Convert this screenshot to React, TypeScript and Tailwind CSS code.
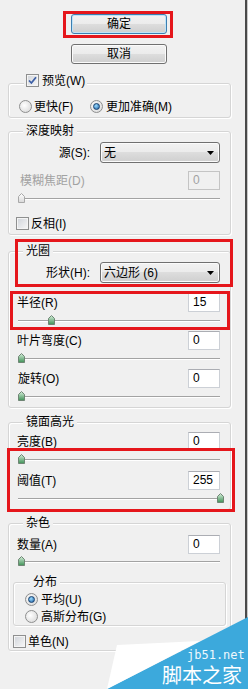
import { useId } from 'react';

const btnBg = 'bg-[linear-gradient(#f2f2f2_0%,#ebebeb_50%,#dddddd_50%,#cfcfcf_100%)]';

function Checkbox({ checked }: { checked?: boolean }) {
  return (
    <span className="w-[13px] h-[13px] shrink-0 border border-[#8e8f8f] bg-[linear-gradient(135deg,#cfd3d9,#f8f8f8)] shadow-[inset_0_0_0_1px_#f4f4f4] flex items-center justify-center">
      {checked && (
        <svg width="9" height="9" viewBox="0 0 9 9">
          <path d="M1 4.5 L3.4 7 L8 1.2" stroke="#3d5fa6" strokeWidth="1.8" fill="none" />
        </svg>
      )}
    </span>
  );
}

function Radio({ checked }: { checked?: boolean }) {
  return (
    <span className="w-[13px] h-[13px] shrink-0 rounded-full border border-[#8e8f8f] bg-[radial-gradient(circle_at_40%_40%,#ffffff,#d4d4d4)] flex items-center justify-center">
      {checked && (
        <span className="w-[7px] h-[7px] rounded-full border border-[#16406e] bg-[radial-gradient(circle_at_40%_35%,#9adcff,#1d5ea3)]" />
      )}
    </span>
  );
}

function Title({ children, className = 'ml-[14px]' }: { children: React.ReactNode; className?: string }) {
  return (
    <div className={`-mt-[8px] w-fit h-[14px] px-[3px] bg-[#f0f0f0] leading-[14px] ${className}`}>{children}</div>
  );
}

function Thumb({ left, disabled }: { left: number; disabled?: boolean }) {
  const id = useId();
  return (
    <svg width="7" height="10" viewBox="0 0 7 10" className="absolute top-0" style={{ left }}>
      <defs>
        <linearGradient id={id} x1="0" y1="0" x2="0" y2="1">
          <stop offset="0" stopColor={disabled ? '#ffffff' : '#d6eedb'} />
          <stop offset="1" stopColor={disabled ? '#d8d8d8' : '#3f9156'} />
        </linearGradient>
      </defs>
      <path d="M3.5 0.5 L6.5 3.5 V9.5 H0.5 V3.5 Z" fill={`url(#${id})`} stroke={disabled ? '#a8a8a8' : '#6f8574'} />
    </svg>
  );
}

function Slider({ value, max, disabled, className }: { value: number; max: number; disabled?: boolean; className: string }) {
  return (
    <div className={`relative ml-[9px] w-[206px] h-[10px] ${className}`}>
      <div className="w-[202px] mt-[5px] h-[2px] border-t border-t-[#a3a3a3] border-b border-b-white" />
      <Thumb left={Math.round((value / max) * 199)} disabled={disabled} />
    </div>
  );
}

function Field({ label, value, disabled, className }: { label: string; value: string; disabled?: boolean; className: string }) {
  return (
    <div className={`flex items-center justify-between h-[19px] pr-[10px] ${className}`}>
      <span className={disabled ? 'text-[#a2a2a2]' : ''}>{label}</span>
      <div
        className={`w-[32px] h-[19px] border pl-[4px] leading-[17px] ${
          disabled ? 'border-[#c4c4c4] bg-[#f0f0f0] text-[#a2a2a2]' : 'border-[#ccd0d6] border-t-[#abadb3] bg-white'
        }`}
      >
        {value}
      </div>
    </div>
  );
}

function Select({ label, value, className }: { label: string; value: string; className: string }) {
  return (
    <div className={`flex items-center h-[21px] ${className}`}>
      <span className="w-[81px] text-right">{label}</span>
      <div className={`ml-[10px] w-[120px] h-[21px] rounded-[3px] border border-[#707070] ${btnBg} shadow-[inset_0_0_0_1px_#fbfbfb] flex items-center justify-between pl-[3px] pr-[5px]`}>
        <span>{value}</span>
        <svg width="7" height="4" viewBox="0 0 7 4">
          <path d="M0 0 H7 L3.5 4 Z" fill="#000" />
        </svg>
      </div>
    </div>
  );
}

const groupCls = 'ml-[8px] w-[223px] border border-[#d5d5d5] rounded-[3px] shadow-[inset_1px_1px_0_#fff,1px_1px_0_#fff] flex flex-col';

export default function App() {
  return (
    <div className="relative w-[248px] h-[689px] overflow-hidden bg-[#f0f0f0] text-[12px] leading-[14px] text-black font-['Liberation_Sans','Noto_Sans_CJK_SC',sans-serif] flex">
      <div className="w-[245px] flex flex-col">
        <div className={`mt-[14px] ml-[71px] w-[96px] h-[20px] rounded-[3px] border border-[#3c7fb1] ${btnBg} shadow-[inset_0_0_0_1px_#bfe3f7] flex items-center justify-center`}>
          确定
        </div>
        <div className={`mt-[10px] ml-[71px] w-[96px] h-[20px] rounded-[3px] border border-[#707070] ${btnBg} shadow-[inset_0_0_0_1px_#fbfbfb] flex items-center justify-center`}>
          取消
        </div>

        {/* 预览 */}
        <div className={`${groupCls} mt-[19px] h-[35px]`}>
          <div className="-mt-[10px] ml-[15px] w-fit h-[13px] px-[2px] bg-[#f0f0f0] flex items-center gap-[3px]">
            <Checkbox checked />
            <span>预览(W)</span>
          </div>
          <div className="mt-[13px] h-[13px] flex items-center">
            <div className="ml-[10px] w-[71px] flex items-center gap-[2px]">
              <Radio />
              <span>更快(F)</span>
            </div>
            <div className="flex items-center gap-[3px]">
              <Radio checked />
              <span>更加准确(M)</span>
            </div>
          </div>
        </div>

        {/* 深度映射 */}
        <div className={`${groupCls} mt-[13px] h-[104px]`}>
          <Title>深度映射</Title>
          <Select label="源(S):" value="无" className="mt-[4px]" />
          <Field label="模糊焦距(D)" value="0" disabled className="mt-[8px] pl-[11px]" />
          <Slider value={0} max={100} disabled className="mt-[3px]" />
          <div className="mt-[14px] ml-[7px] h-[13px] flex items-center gap-[2px]">
            <Checkbox />
            <span>反相(I)</span>
          </div>
        </div>

        {/* 光圈 */}
        <div className={`${groupCls} mt-[16px] h-[157px]`}>
          <Title>光圈</Title>
          <Select label="形状(H):" value="六边形 (6)" className="mt-[4px]" />
          <Field label="半径(R)" value="15" className="mt-[10px] pl-[8px]" />
          <Slider value={15} max={100} className="mt-[3px]" />
          <Field label="叶片弯度(C)" value="0" className="mt-[6px] pl-[8px]" />
          <Slider value={0} max={100} className="mt-[3px]" />
          <Field label="旋转(O)" value="0" className="mt-[6px] pl-[9px]" />
          <Slider value={0} max={100} className="mt-[3px]" />
        </div>

        {/* 镜面高光 */}
        <div className={`${groupCls} mt-[14px] h-[88px]`}>
          <Title>镜面高光</Title>
          <Field label="亮度(B)" value="0" className="mt-[3px] pl-[8px]" />
          <Slider value={0} max={100} className="mt-[3px]" />
          <Field label="阈值(T)" value="255" className="mt-[7px] pl-[8px]" />
          <Slider value={255} max={255} className="mt-[3px]" />
        </div>

        {/* 杂色 */}
        <div className={`${groupCls} mt-[13px] h-[128px]`}>
          <Title>杂色</Title>
          <Field label="数量(A)" value="0" className="mt-[5px] pl-[8px]" />
          <Slider value={0} max={100} className="mt-[2px]" />
          <div className="mt-[16px] ml-[4px] w-[213px] h-[44px] border border-[#d5d5d5] rounded-[3px] shadow-[inset_1px_1px_0_#fff,1px_1px_0_#fff] flex flex-col">
            <Title className="ml-[16px]">分布</Title>
            <div className="mt-[4px] ml-[11px] h-[13px] flex items-center gap-[3px]">
              <Radio checked />
              <span>平均(U)</span>
            </div>
            <div className="mt-[4px] ml-[11px] h-[13px] flex items-center gap-[3px]">
              <Radio />
              <span>高斯分布(G)</span>
            </div>
          </div>
          <div className="mt-[9px] ml-[4px] h-[13px] flex items-center gap-[2px]">
            <Checkbox />
            <span>单色(N)</span>
          </div>
        </div>
      </div>
      <div className="w-[2px] bg-[#4a4a4a]" />
      <div className="w-[1px] bg-[#c9c9c9]" />

      {/* annotation boxes */}
      <div className="absolute left-[63px] top-[11px] w-[110px] h-[27px] border-[3px] border-[#e5161b]" />
      <div className="absolute left-[15px] top-[239px] w-[218px] h-[48px] border-[3px] border-[#e5161b]" />
      <div className="absolute left-[10px] top-[291px] w-[220px] h-[39px] border-[3px] border-[#e5161b]" />
      <div className="absolute left-[7px] top-[448px] w-[228px] h-[64px] border-[3px] border-[#e5161b]" />

      {/* watermark */}
      <svg width="141" height="74" viewBox="0 0 141 74" className="absolute right-0 bottom-0">
        <polygon points="141,2 141,74 0,74" fill="#3ca9dc" />
        <polygon points="10,30 93,26 0,74" fill="#ffffff" />
        <text x="80" y="44" fill="#eef8fd" fontSize="12" fontFamily="'DejaVu Sans Mono', monospace">jb51.net</text>
        <text x="55" y="68" fill="#ffffff" fontSize="20" fontFamily="'Noto Sans CJK SC', sans-serif">脚本之家</text>
      </svg>
    </div>
  );
}
